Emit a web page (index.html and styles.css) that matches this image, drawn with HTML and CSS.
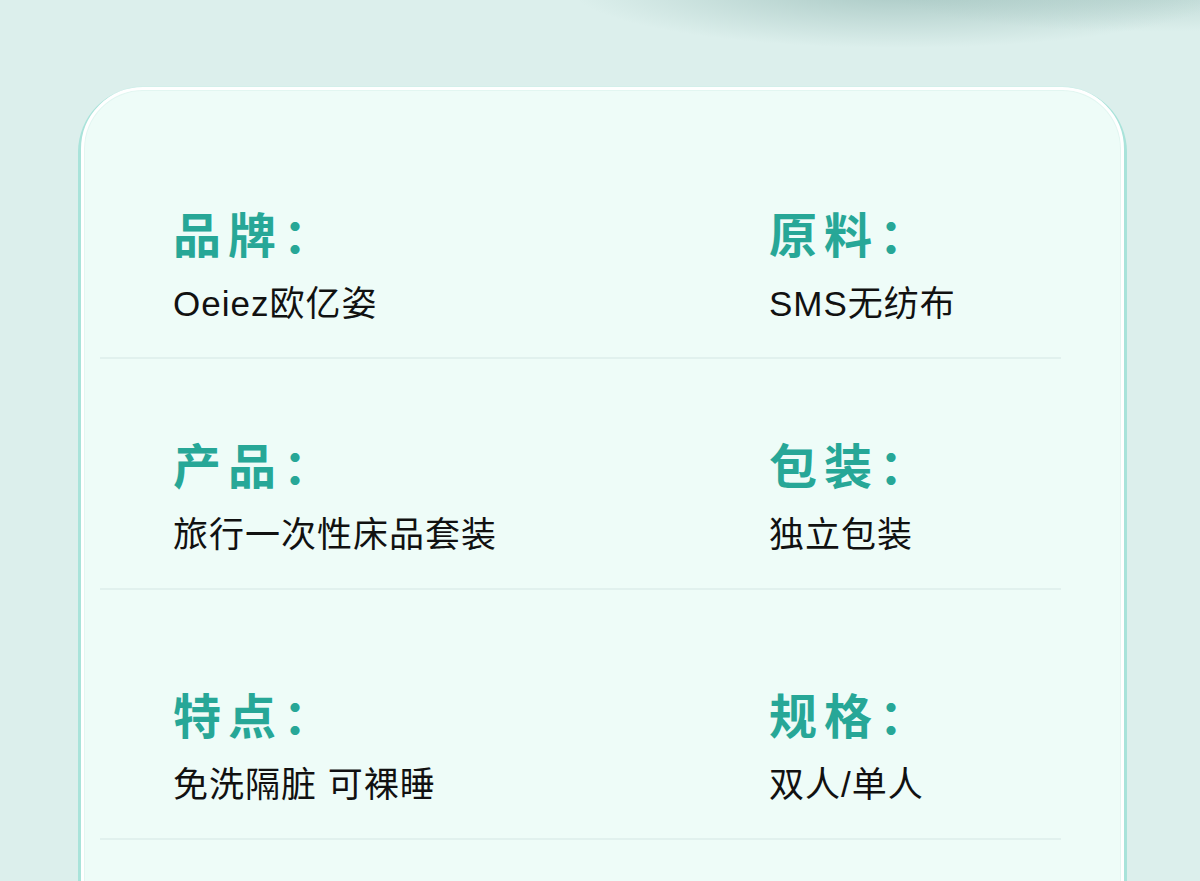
FILE: index.html
```html
<!DOCTYPE html>
<html lang="zh">
<head>
<meta charset="utf-8">
<title>产品参数</title>
<link rel="stylesheet" href="styles.css">
</head>
<body>
<main class="card">
  <section class="specs">
    <div class="row row-first">
      <div class="item">
        <div class="label">品牌：</div>
        <div class="value">Oeiez欧亿姿</div>
      </div>
      <div class="item">
        <div class="label">原料：</div>
        <div class="value">SMS无纺布</div>
      </div>
    </div>
    <div class="row row-second">
      <div class="item">
        <div class="label">产品：</div>
        <div class="value">旅行一次性床品套装</div>
      </div>
      <div class="item">
        <div class="label">包装：</div>
        <div class="value">独立包装</div>
      </div>
    </div>
    <div class="row row-third">
      <div class="item">
        <div class="label">特点：</div>
        <div class="value">免洗隔脏 可裸睡</div>
      </div>
      <div class="item">
        <div class="label">规格：</div>
        <div class="value">双人/单人</div>
      </div>
    </div>
  </section>
</main>
</body>
</html>
```
FILE: styles.css
```css
html, body {
  margin: 0;
  padding: 0;
  overflow: hidden;
  height: 881px;
}

body {
  background:
    radial-gradient(ellipse 330px 60px at 900px -12px, rgba(150, 186, 181, 0.75), rgba(150, 186, 181, 0) 100%),
    radial-gradient(ellipse 260px 40px at 1150px -8px, rgba(160, 194, 189, 0.5), rgba(160, 194, 189, 0) 100%),
    #dcefec;
  font-family: "Noto Sans CJK SC", sans-serif;
}

.card {
  box-sizing: border-box;
  margin: 87px 0 0 81px;
  width: 1043px;
  height: 900px;
  border: 3px solid #ffffff;
  border-radius: 62px;
  background: #eefcf8;
  box-shadow:
    0 3px 0 3px #a9e3da,
    0 -1px 0 0 #d3efea,
    inset 0 0 0 1px #e2f6f1;
  padding: 118px 60px 0 16px;
}

.row {
  display: grid;
  grid-template-columns: 596px 1fr;
  padding-left: 73px;
  padding-bottom: 36px;
  border-bottom: 2px solid #e1f1ee;
}

.row-second {
  padding-top: 80px;
}

.row-third {
  padding-top: 99px;
}

.label {
  font-family: "Noto Sans CJK SC", sans-serif;
  font-weight: 700;
  font-size: 48px;
  line-height: 48px;
  letter-spacing: 7px;
  color: #27a797;
  margin-bottom: 31px;
}

.value {
  font-family: "Liberation Sans", "Noto Sans CJK SC", sans-serif;
  font-size: 35px;
  line-height: 34px;
  letter-spacing: 1px;
  color: #111111;
}
```
